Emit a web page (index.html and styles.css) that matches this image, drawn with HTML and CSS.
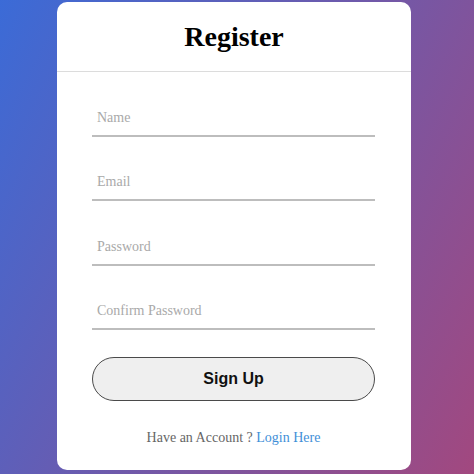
FILE: index.html
```html
<!DOCTYPE html>
<html lang="en">
<head>
<meta charset="utf-8">
<title>Register</title>
<link rel="stylesheet" href="styles.css">
</head>
<body>
<div class="card">
  <div class="card-header">
    <h1 class="title">Register</h1>
  </div>
  <form class="form">
    <div class="fields">
      <input class="field" type="text" placeholder="Name">
      <input class="field" type="email" placeholder="Email">
      <input class="field" type="password" placeholder="Password">
      <input class="field" type="password" placeholder="Confirm Password">
    </div>
    <button class="btn" type="button">Sign Up</button>
    <p class="footer">Have an Account ? <a class="link" href="#">Login Here</a></p>
  </form>
</div>
</body>
</html>
```
FILE: styles.css
```css
html, body {
  margin: 0;
  padding: 0;
  height: 100%;
}
body {
  background: linear-gradient(117deg, #3b6bd7, #a2487f);
  font-family: "Liberation Serif", "Times New Roman", serif;
  overflow: hidden;
}
.card {
  width: 354px;
  height: 468px;
  margin: 2px 0 0 57px;
  background: #fff;
  border-radius: 10px;
  box-sizing: border-box;
  display: flex;
  flex-direction: column;
}
.card-header {
  height: 70px;
  box-sizing: border-box;
  border-bottom: 1px solid #dcdcdc;
  display: flex;
  align-items: center;
  justify-content: center;
}
.title {
  margin: 0;
  font-size: 28px;
  font-weight: bold;
  color: #000;
  line-height: 31px;
}
.form {
  display: flex;
  flex-direction: column;
  gap: 27px;
  padding: 29px 36px 0 35px;
  margin: 0;
}
.fields {
  display: flex;
  flex-direction: column;
  gap: 29px;
}
.field {
  height: 35.5px;
  box-sizing: border-box;
  border: none;
  border-bottom: 2px solid #bdbdbd;
  padding: 0 5px;
  margin: 0;
  font-family: "Liberation Serif", "Times New Roman", serif;
  font-size: 14px;
  color: #333;
  outline: none;
  background: transparent;
}
.field::placeholder {
  color: #a9a9a9;
}
.btn {
  height: 44px;
  box-sizing: border-box;
  border: 1.5px solid #4a4a4a;
  border-radius: 22px;
  background: #efefef;
  font-family: "Liberation Sans", Arial, sans-serif;
  font-size: 16px;
  font-weight: bold;
  color: #111;
  padding: 0;
  margin: 0 0 2px 0;
}
.footer {
  margin: 0;
  text-align: center;
  font-size: 14px;
  color: #666;
}
.link {
  color: #3f8fd8;
  text-decoration: none;
}
```
